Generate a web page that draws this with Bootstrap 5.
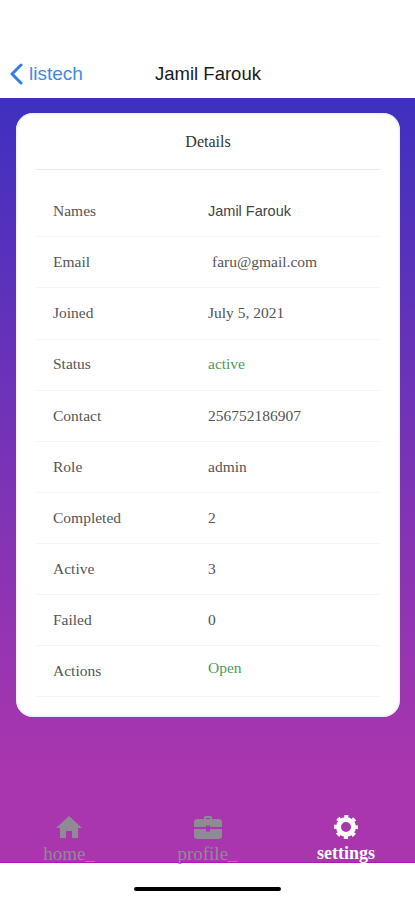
<!DOCTYPE html>
<html lang="en">
<head>
  <meta charset="UTF-8" />
  <meta name="viewport" content="width=device-width, initial-scale=1.0">
  <title>Jamil Farouk</title>
  <link href="https://cdn.jsdelivr.net/npm/bootstrap@5.3.0/dist/css/bootstrap.min.css" rel="stylesheet">
  <style>
    body { margin: 0; height: 900px; overflow: hidden; background: #fff; font-family: "Liberation Serif", serif; }
    .top-bar { height: 98px; padding: 0 9px 10px; position: relative; font-family: "Liberation Sans", sans-serif; font-size: 19px; }
    .back-link { color: #3d8be8; text-decoration: none; gap: 6px; }
    .bar-title { position: absolute; left: 1px; right: 0; bottom: 10px; text-align: center; color: #1b1b1b; font-size: 18.5px; }
    .grad-area { height: 765px; padding: 15px 15px 0 16px; border-bottom: 1px solid #b414bb; background: linear-gradient(180deg, #3f30bf 0%, #a936ae 88%, #aa36ae 100%); }
    .info-box { height: 604px; border-radius: 17px; padding: 0 20px; background: #fff; box-shadow: inset 0 0 2px 1px rgba(225,232,245,.85); border: 0; }
    .box-head { height: 57px; border-bottom: 1px solid #e9e9e9; font-size: 16px; color: #333; padding-top: 2px; margin-bottom: 16.25px; }
    .info-row { height: 51.1px; padding: 0 0 1px 17px; border-bottom: 1px solid #f5f5f5; font-size: 15.5px; color: #555; }
    .info-label { width: 155px; }
    .info-sans { font-family: "Liberation Sans", sans-serif; font-size: 14.5px; color: #444; padding-top: 2px; }
    .info-ok { color: #4f9a58; }
    .info-up { padding-bottom: 6px; }
    .tab-strip { height: 47px; margin: 98px -15px 0 -16px; }
    .tab-item { width: 138px; line-height: 1; font-size: 19px; color: #8f8a96; text-align: center; }
    .tab-item svg { display: block; margin: 0 auto 5px; }
    .tab-on { color: #fff; font-weight: 700; font-size: 18px; }
    .home-wrap { height: 36px; padding-top: 24px; }
    .home-pill { width: 147px; height: 4px; background: #000; border-radius: 2px; margin: 0 auto; }
  </style>
</head>
<body>

<div class="top-bar d-flex align-items-end">
  <a class="back-link d-flex align-items-center" href="#">
    <svg width="14" height="22" viewBox="0 0 14 22"><path d="M12 2 3 11l9 9" fill="none" stroke="#2f7fe8" stroke-width="3" stroke-linecap="round" stroke-linejoin="round"/></svg>
    <span>listech</span>
  </a>
  <div class="bar-title">Jamil Farouk</div>
</div>

<div class="grad-area d-flex flex-column">
  <div class="card info-box flex-shrink-0">
    <div class="box-head d-flex align-items-center justify-content-center">Details</div>
    <div class="info-row d-flex align-items-center"><div class="info-label">Names</div><div class="info-sans">Jamil Farouk</div></div>
    <div class="info-row d-flex align-items-center"><div class="info-label">Email</div><div class="ps-1">faru@gmail.com</div></div>
    <div class="info-row d-flex align-items-center"><div class="info-label">Joined</div><div>July 5, 2021</div></div>
    <div class="info-row d-flex align-items-center"><div class="info-label">Status</div><div class="info-ok">active</div></div>
    <div class="info-row d-flex align-items-center"><div class="info-label">Contact</div><div>256752186907</div></div>
    <div class="info-row d-flex align-items-center"><div class="info-label">Role</div><div>admin</div></div>
    <div class="info-row d-flex align-items-center"><div class="info-label">Completed</div><div>2</div></div>
    <div class="info-row d-flex align-items-center"><div class="info-label">Active</div><div>3</div></div>
    <div class="info-row d-flex align-items-center"><div class="info-label">Failed</div><div>0</div></div>
    <div class="info-row d-flex align-items-center"><div class="info-label">Actions</div><div class="info-ok info-up">Open</div></div>
  </div>
  <div class="tab-strip d-flex justify-content-between flex-shrink-0">
    <div class="tab-item">
      <svg width="26" height="24" viewBox="0 0 26 24"><path fill="#8f8a96" d="M13 1 0 13h4v10h6v-7h6v7h6V13h4z"/></svg>
      home_
    </div>
    <div class="tab-item">
      <svg width="28" height="24" viewBox="0 0 28 24"><path fill="#8f8a96" fill-rule="evenodd" d="M10 4V2.500A1.500 1.500 0 0 1 11.500 1h5A1.500 1.500 0 0 1 18 2.500V4h7a3 3 0 0 1 3 3v5H16v-1.500h-4V12H0V7a3 3 0 0 1 3-3zm2 0h4V3h-4zM0 14h12v2.500h4V14h12v7a3 3 0 0 1-3 3H3a3 3 0 0 1-3-3z"/></svg>
      profile_
    </div>
    <div class="tab-item tab-on">
      <svg width="24" height="24" viewBox="0 0 24 24" fill="none" stroke="#fff"><circle cx="12" cy="12" r="7.5" stroke-width="5"/><circle cx="12" cy="12" r="10.25" stroke-width="3.5" stroke-dasharray="4 4.05" stroke-dashoffset="2"/></svg>
      settings
    </div>
  </div>
</div>

<div class="home-wrap"><div class="home-pill"></div></div>

</body>
</html>
